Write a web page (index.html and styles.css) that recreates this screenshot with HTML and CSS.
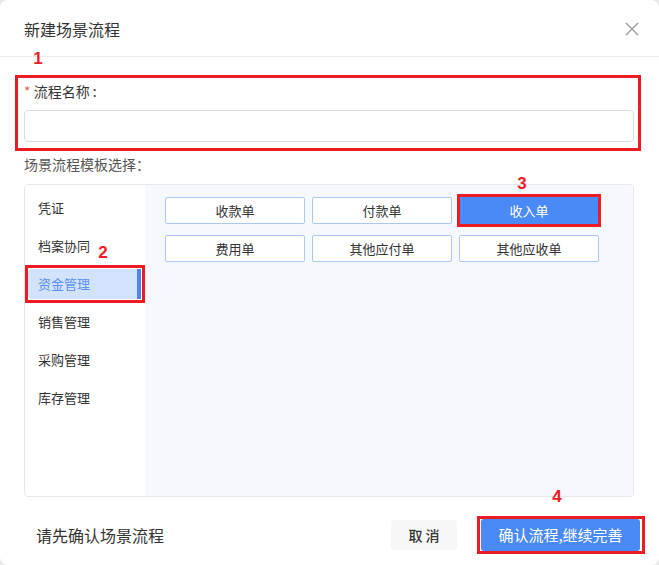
FILE: index.html
```html
<!DOCTYPE html>
<html lang="zh">
<head>
<meta charset="utf-8">
<title>新建场景流程</title>
<link rel="stylesheet" href="styles.css">
</head>
<body>
<div class="dialog">
  <div class="header">
    <div class="title">新建场景流程</div>
    <svg class="close" width="14" height="14" viewBox="0 0 14 14"><path d="M1 1L13 13M13 1L1 13" stroke="#9a9a9a" stroke-width="1.4" fill="none"/></svg>
  </div>
  <div class="body">
    <div class="field-label"><span class="req">*</span> 流程名称 :</div>
    <div class="input"></div>
    <div class="section-label">场景流程模板选择：</div>
    <div class="panel">
      <div class="sidebar">
        <div class="item">凭证</div>
        <div class="item">档案协同</div>
        <div class="item active">资金管理</div>
        <div class="item">销售管理</div>
        <div class="item">采购管理</div>
        <div class="item">库存管理</div>
      </div>
      <div class="content">
        <div class="grid">
          <div class="btn">收款单</div>
          <div class="btn">付款单</div>
          <div class="btn selected">收入单</div>
          <div class="btn">费用单</div>
          <div class="btn">其他应付单</div>
          <div class="btn">其他应收单</div>
        </div>
      </div>
    </div>
  </div>
  <div class="footer">
    <div class="hint">请先确认场景流程</div>
    <div class="actions">
      <div class="cancel">取 消</div>
      <div class="confirm">确认流程,继续完善</div>
    </div>
  </div>

  <div class="mark box1"></div>
  <div class="num n1">1</div>
  <div class="mark box2"></div>
  <div class="num n2">2</div>
  <div class="mark box3"></div>
  <div class="num n3">3</div>
  <div class="mark box4"></div>
  <div class="num n4">4</div>
</div>
</body>
</html>
```

FILE: styles.css
```css
* { box-sizing: border-box; }
html, body { margin: 0; padding: 0; }
body {
  background: #e9e9e9;
  font-family: "Noto Sans CJK SC", "Noto Sans", sans-serif;
  color: #333;
}
.dialog {
  position: relative;
  width: 659px;
  height: 565px;
  background: #fff;
  border-radius: 8px;
  overflow: hidden;
}
.header {
  height: 57px;
  padding: 0 20px 0 24px;
  border-bottom: 1px solid #ececec;
  display: flex;
  align-items: center;
  justify-content: space-between;
}
.title { font-size: 16px; line-height: 20px; color: #333; margin-top: 1px; }
.close { display: block; margin-top: 1px; }
.body { padding: 0 25px 0 24px; }
.field-label {
  margin-top: 24px;
  font-size: 14px;
  line-height: 20px;
  color: #333;
}
.req { color: #f25a5a; }
.input {
  margin-top: 9px;
  height: 32px;
  border: 1px solid #dcdcdc;
  border-radius: 4px;
  background: #fff;
}
.section-label {
  margin-top: 12px;
  font-size: 14px;
  line-height: 20px;
  color: #555;
}
.panel {
  margin-top: 10px;
  height: 313px;
  border: 1px solid #e4e7ec;
  border-radius: 4px;
  display: flex;
  overflow: hidden;
}
.sidebar {
  width: 120px;
  padding: 8px 4px 0 3px;
  display: flex;
  flex-direction: column;
  gap: 8px;
  background: #fff;
}
.item {
  height: 30px;
  line-height: 30px;
  padding-left: 10px;
  font-size: 13px;
  color: #333;
  border-radius: 4px 0 0 4px;
}
.item.active {
  background: #d3e3fd;
  color: #5a8ef0;
  border-right: 4px solid #4a87f0;
}
.content {
  flex: 1;
  background: #f5f8fc;
  padding: 12px 0 0 20px;
}
.grid {
  display: grid;
  grid-template-columns: repeat(3, 140px);
  column-gap: 7px;
  row-gap: 11px;
}
.btn {
  height: 27px;
  line-height: 25px;
  text-align: center;
  font-size: 13px;
  color: #333;
  background: #fff;
  border: 1px solid #adc7f5;
  border-radius: 2px;
}
.btn.selected {
  background: #4a8af4;
  border-color: #4a8af4;
  color: #fff;
}
.footer {
  margin-top: 8px;
  height: 60px;
  padding: 0 19px 0 36px;
  display: flex;
  align-items: center;
  justify-content: space-between;
}
.hint { font-size: 16px; color: #333; }
.actions { display: flex; align-items: center; gap: 24px; }
.cancel {
  width: 66px;
  height: 30px;
  line-height: 30px;
  text-align: center;
  background: #f7f7f7;
  border-radius: 3px;
  font-size: 14px;
  font-weight: 500;
  color: #333;
}
.confirm {
  width: 159px;
  height: 32px;
  line-height: 32px;
  text-align: center;
  background: #4a8af4;
  border-radius: 3px;
  color: #fff;
  font-size: 15px;
}
.mark {
  position: absolute;
  border: 3px solid #ec1c24;
}
.box1 { left: 15px; top: 75px; width: 626px; height: 76px; }
.box2 { left: 25px; top: 265px; width: 120px; height: 38px; }
.box3 { left: 457px; top: 194px; width: 144px; height: 33px; }
.box4 { left: 477px; top: 516px; width: 168px; height: 38px; }
.num {
  position: absolute;
  font-family: "Liberation Sans", Arial, sans-serif;
  font-weight: bold;
  font-size: 17px;
  line-height: 20px;
  color: #ec1c24;
  width: 20px;
  text-align: center;
}
.n1 { left: 28px; top: 49px; }
.n2 { left: 93px; top: 243px; }
.n3 { left: 512px; top: 174px; }
.n4 { left: 547px; top: 487px; }
```
